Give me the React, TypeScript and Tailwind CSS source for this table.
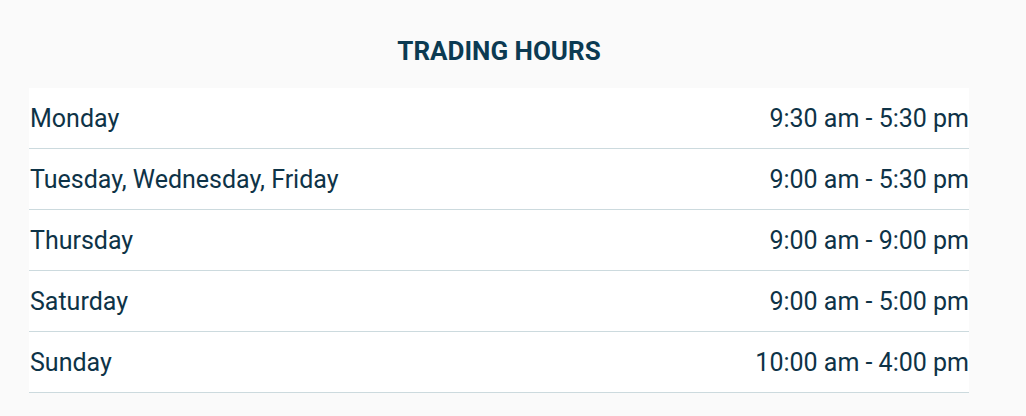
import React from "react";

const rows = [
  ["Monday", "9:30 am - 5:30 pm"],
  ["Tuesday, Wednesday, Friday", "9:00 am - 5:30 pm"],
  ["Thursday", "9:00 am - 9:00 pm"],
  ["Saturday", "9:00 am - 5:00 pm"],
  ["Sunday", "10:00 am - 4:00 pm"],
];

export default function App() {
  return (
    <div
      className="w-[1026px] h-[416px] bg-[#fafafa] text-[#0e3347]"
      style={{ fontFamily: "Roboto, 'Liberation Sans', sans-serif" }}
    >
      <div className="ml-[29px] w-[940px] pt-[36px]">
        <h2 className="text-center text-[26px] leading-[30px] font-bold text-[#0b3a52] h-[52px]">
          TRADING HOURS
        </h2>
        <div className="bg-white">
          {rows.map(([d, t]) => (
            <div
              key={d}
              className="flex justify-between items-center h-[61px] pt-[2px] border-b border-[#ccdade] pl-[1px] text-[25px]"
            >
              <span>{d}</span>
              <span>{t}</span>
            </div>
          ))}
        </div>
      </div>
    </div>
  );
}
